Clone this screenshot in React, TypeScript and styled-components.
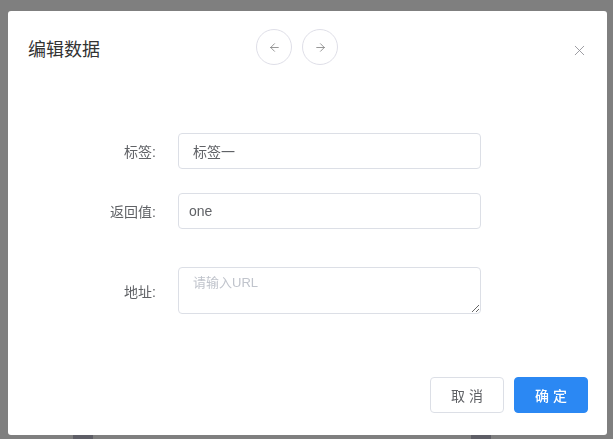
import styled, { createGlobalStyle } from "styled-components";
import { ArrowLeft, ArrowRight, X } from "lucide-react";

const GlobalStyle = createGlobalStyle`
  * {
    box-sizing: border-box;
  }
  html, body {
    margin: 0;
    padding: 0;
    height: 100%;
  }
  body {
    font-family: "Liberation Sans", "Noto Sans CJK SC", sans-serif;
    background: #fff;
  }
`;

export default function App() {
  return (
    <>
      <GlobalStyle />
      <Page>
        <BgBar>
          <BgChip />
          <BgChip />
        </BgBar>
      </Page>

      <Overlay>
        <Dialog>
          <Header>
            <Title>编辑数据</Title>
            <Nav>
              <RoundButton aria-label="上一条">
                <ArrowLeft size={13} strokeWidth={1.4} />
              </RoundButton>
              <RoundButton aria-label="下一条">
                <ArrowRight size={13} strokeWidth={1.4} />
              </RoundButton>
            </Nav>
            <CloseButton aria-label="关闭">
              <X size={17} strokeWidth={1.2} />
            </CloseButton>
          </Header>

          <Form>
            <Label>标签:</Label>
            <Input defaultValue="标签一" />

            <Label>返回值:</Label>
            <Input defaultValue="one" $pad={10} />

            <Label $spaced>地址:</Label>
            <TextArea $spaced placeholder="请输入URL" />
          </Form>

          <Footer>
            <Button>取 消</Button>
            <Button $primary>确 定</Button>
          </Footer>
        </Dialog>
      </Overlay>
    </>
  );
}

const Page = styled.div`
  height: 100vh;
  display: flex;
  flex-direction: column;
  justify-content: flex-end;
`;

const BgBar = styled.div`
  display: flex;
  gap: 378px;
  padding-left: 73px;
`;

const BgChip = styled.div`
  width: 20px;
  height: 14px;
  background: #bcbccc;
`;

const Overlay = styled.div`
  position: fixed;
  inset: 0;
  background: rgba(0, 0, 0, 0.5);
  display: flex;
  align-items: flex-start;
  padding: 11px 0 0 8px;
`;

const Dialog = styled.div`
  width: 599px;
  height: 424px;
  background: #fff;
  border-radius: 3px;
  display: flex;
  flex-direction: column;
`;

const Header = styled.div`
  display: flex;
  align-items: center;
  padding: 18px 19px 0 20px;
  height: 54px;
`;

const Title = styled.h2`
  width: 228px;
  margin: 5px 0 0;
  font-size: 18px;
  font-weight: 400;
  color: #333;
  line-height: 24px;
`;

const Nav = styled.div`
  display: flex;
  gap: 10px;
`;

const RoundButton = styled.button`
  width: 36px;
  height: 36px;
  padding: 0;
  border-radius: 50%;
  border: 1px solid #dfdfe8;
  background: #fff;
  color: #777;
  display: flex;
  align-items: center;
  justify-content: center;
  cursor: pointer;
`;

const CloseButton = styled.button`
  margin: 6px 0 0 auto;
  padding: 0;
  border: none;
  background: none;
  color: #8c8c94;
  display: flex;
  cursor: pointer;
`;

const Form = styled.div`
  display: grid;
  grid-template-columns: 170px 1fr;
  row-gap: 24px;
  align-items: center;
  padding: 68px 126px 0 0;
`;

const Label = styled.label<{ $spaced?: boolean }>`
  text-align: right;
  padding-right: 22px;
  font-size: 14px;
  color: #606266;
  margin-top: ${(p) => (p.$spaced ? "14px" : "0")};
`;

const Input = styled.input<{ $pad?: number }>`
  height: 36px;
  width: 100%;
  border: 1px solid #dcdfe6;
  border-radius: 4px;
  padding: 0 ${(p) => p.$pad ?? 14}px;
  font-family: inherit;
  font-size: 14px;
  color: #606266;
  outline: none;
`;

const TextArea = styled.textarea<{ $spaced?: boolean }>`
  height: 47px;
  width: 100%;
  margin-top: ${(p) => (p.$spaced ? "14px" : "0")};
  border: 1px solid #dcdfe6;
  border-radius: 4px;
  padding: 5px 14px;
  font-family: inherit;
  font-size: 13px;
  line-height: 1.5;
  color: #606266;
  outline: none;
  display: block;

  &::placeholder {
    color: #c0c4cc;
  }
`;

const Footer = styled.div`
  margin-top: auto;
  display: flex;
  justify-content: flex-end;
  gap: 10px;
  padding: 0 19px 22px;
`;

const Button = styled.button<{ $primary?: boolean }>`
  width: 74px;
  height: 36px;
  border-radius: 4px;
  font-family: inherit;
  font-size: 14px;
  cursor: pointer;
  border: 1px solid ${(p) => (p.$primary ? "#2b88f3" : "#dcdfe6")};
  background: ${(p) => (p.$primary ? "#2b88f3" : "#fff")};
  color: ${(p) => (p.$primary ? "#fff" : "#606266")};
  font-weight: ${(p) => (p.$primary ? 500 : 400)};
`;
